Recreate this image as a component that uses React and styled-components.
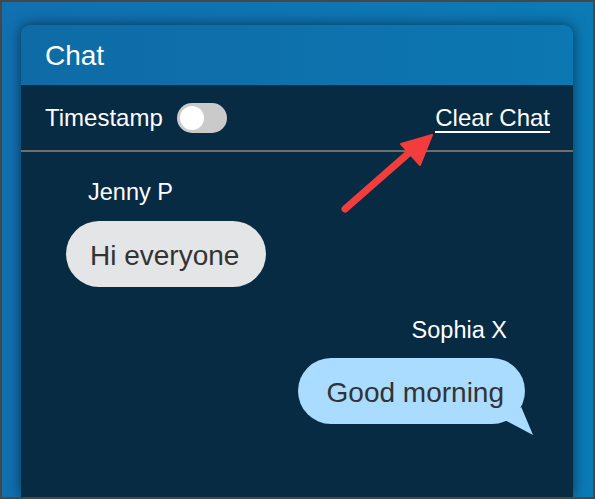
import React from "react";
import styled, { createGlobalStyle } from "styled-components";

const Global = createGlobalStyle`
    html, body {
        margin: 0;
        padding: 0;
        background: #474747;
    }
    * {
        box-sizing: border-box;
    }
`

const Frame = styled.div`
    position: relative;
    width: 595px;
    height: 499px;
    border: 2px solid #474747;
    background: linear-gradient(90deg, #1170b0 0%, #0e76b3 60%, #0b7bb6 100%);
    padding: 23px 20px 0 19px;
    display: flex;
    flex-direction: column;
    overflow: hidden;
    font-family: "Liberation Sans", Arial, sans-serif;
`

const Panel = styled.div`
    flex: 1;
    display: flex;
    flex-direction: column;
    border-radius: 8px 8px 0 0;
    overflow: hidden;
    background: #072b43;
    box-shadow: 0 0 14px rgba(0, 0, 0, 0.55);
`

const Header = styled.div`
    height: 60px;
    display: flex;
    align-items: center;
    padding: 2px 0 0 24px;
    background: linear-gradient(90deg, #0f6ba6 0%, #0c77b2 100%);
    color: #fff;
    font-size: 28px;
`

const Toolbar = styled.div`
    height: 67px;
    display: flex;
    align-items: center;
    justify-content: space-between;
    padding: 0 23px 0 24px;
    border-bottom: 2px solid #6e6e6e;
    color: #fff;
    font-size: 24px;
`

const Label = styled.div`
    display: flex;
    align-items: center;
    gap: 14px;
`

const Toggle = styled.span`
    position: relative;
    width: 50px;
    height: 30px;
    border-radius: 15px;
    background: #cacaca;

    &::after {
        content: "";
        position: absolute;
        left: 3px;
        top: 3px;
        width: 24px;
        height: 24px;
        border-radius: 50%;
        background: #fff;
    }
`

const ClearLink = styled.a`
    color: #fff;
    text-decoration: none;
    border-bottom: 2px solid #fff;
    line-height: 26px;
    margin-top: 2px;
    cursor: pointer;
`

const Messages = styled.div`
    display: flex;
    flex-direction: column;
    padding: 26px 48px 0 45px;
`

const Message = styled.div`
    display: flex;
    flex-direction: column;
    align-items: ${p => (p.$mine ? "flex-end" : "flex-start")};
    margin-bottom: ${p => (p.$mine ? "0" : "29px")};
`

const Name = styled.div`
    color: #fff;
    font-size: 23.5px;
    line-height: 28px;
    margin: ${p => (p.$mine ? "0 18px 14px 0" : "0 0 15px 22px")};
`

const Bubble = styled.div`
    position: relative;
    height: 66px;
    display: flex;
    align-items: center;
    padding: 4px 27px 0 24px;
    border-radius: 33px;
    background: ${p => (p.$mine ? "#a9dcfe" : "#e4e5e6")};
    color: #333;
    font-size: 28px;

    ${p => p.$mine && `
        padding: 4px 21px 0 29px;
        &::after {
            content: "";
            position: absolute;
            right: -8px;
            bottom: -11px;
            width: 28px;
            height: 28px;
            background: #a9dcfe;
            clip-path: polygon(0 47%, 58% 0, 100% 100%);
        }
    `}
`

const Arrow = styled.svg`
    position: absolute;
    left: 0;
    top: 0;
    pointer-events: none;
`

export default function App() {
    return (
        <>
            <Global />
            <Frame>
                <Panel>
                    <Header>Chat</Header>
                    <Toolbar>
                        <Label>
                            Timestamp
                            <Toggle />
                        </Label>
                        <ClearLink>Clear Chat</ClearLink>
                    </Toolbar>
                    <Messages>
                        <Message>
                            <Name>Jenny P</Name>
                            <Bubble>Hi everyone</Bubble>
                        </Message>
                        <Message $mine>
                            <Name $mine>Sophia X</Name>
                            <Bubble $mine>Good morning</Bubble>
                        </Message>
                    </Messages>
                </Panel>
                <Arrow width="595" height="499" viewBox="0 0 595 499">
                    <line x1="343" y1="207" x2="408" y2="150" stroke="#f23d3d" strokeWidth="7" strokeLinecap="round" />
                    <polygon points="430,133 399,142 418,163" fill="#f23d3d" stroke="#f23d3d" strokeWidth="2" strokeLinejoin="round" />
                </Arrow>
            </Frame>
        </>
    );
}
